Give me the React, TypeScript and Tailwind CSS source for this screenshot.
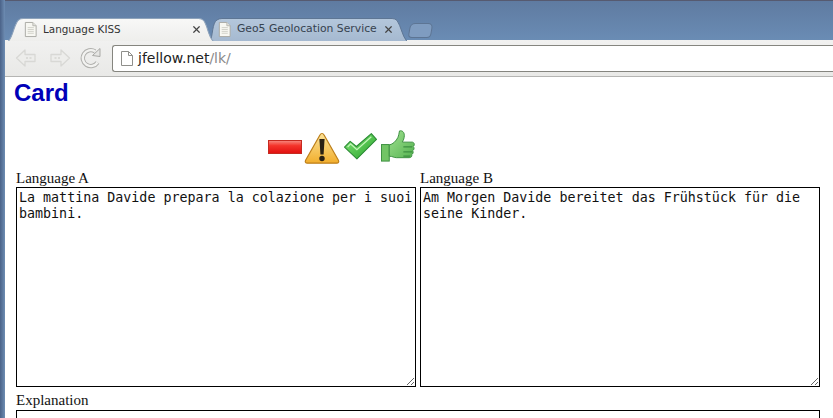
import React from 'react';
import { X } from 'lucide-react';

function PageIcon({ className }: { className?: string }) {
  return (
    <svg viewBox="0 0 16 18" className={className}>
      <path d="M2.500 1.500h8l3.500 3.500v11.500h-11.500z" fill="#f7f7f2" stroke="#a9a9a3" strokeWidth="1" />
      <path d="M10.500 1.500v3.500h3.500" fill="#e3e3dd" stroke="#b5b5af" strokeWidth="1" />
      <path d="M5 7h6.500M5 9h6.500M5 11h6.500M5 13h6.500" stroke="#cfcfc8" strokeWidth="1" />
    </svg>
  );
}

function Tab({ title, active, width, textSize, path }: { title: string; active?: boolean; width: string; textSize: string; path: string }) {
  return (
    <div className={`relative h-[23px] shrink-0 ${width} ${active ? 'z-10' : '-ml-[5px]'}`}>
      <svg className="absolute inset-0 w-full h-full" preserveAspectRatio="none" viewBox="0 0 200 23">
        <defs>
          <linearGradient id="tabOn" x1="0" y1="0" x2="0" y2="1">
            <stop offset="0" stopColor="#f8f8f7" />
            <stop offset="1" stopColor="#eeeeec" />
          </linearGradient>
          <linearGradient id="tabOff" x1="0" y1="0" x2="0" y2="1">
            <stop offset="0" stopColor="#b4c7dc" />
            <stop offset="1" stopColor="#a5b9d0" />
          </linearGradient>
        </defs>
        <path d={path} fill={active ? 'url(#tabOn)' : 'url(#tabOff)'} stroke={active ? '#8ea3bb' : '#5d7594'} strokeWidth="1" />
      </svg>
      <div className={`relative h-full flex items-center ${active ? 'pl-[15px] pr-[12px]' : 'pl-[8px] pr-[14px]'}`}>
        <PageIcon className="w-[15px] h-[17px] shrink-0" />
        <span className={`ml-[5px] flex-1 whitespace-nowrap font-['DejaVu_Sans',sans-serif] ${textSize} ${active ? 'text-[#333]' : 'text-[#36424f]'}`}>
          {title}
        </span>
        <X className="w-[11px] h-[11px] text-[#444]" strokeWidth={2.6} />
      </div>
    </div>
  );
}

function NavArrow({ flip }: { flip?: boolean }) {
  return (
    <svg viewBox="0 0 24 20" className={`w-[24px] h-[20px] ${flip ? '-scale-x-100' : ''}`}>
      <path d="M11 2 2.500 10l8.500 8v-4.500h10v-7h-10z" fill="#ededeb" stroke="#d8d8d5" strokeWidth="1.300" strokeLinejoin="round" />
      <path d="M12 10h7" stroke="#dbdbd8" strokeWidth="2" strokeDasharray="2 1.500" />
    </svg>
  );
}

function ReloadIcon() {
  return (
    <svg viewBox="0 0 22 22" className="w-[22px] h-[22px]">
      <path d="M17.500 15.500A8 8 0 1 1 15 4.300" fill="none" stroke="#b0b0ad" strokeWidth="4.400" />
      <path d="M17.500 15.500A8 8 0 1 1 15 4.300" fill="none" stroke="#f2f2f0" strokeWidth="2.400" />
      <path d="M12.500 8.500 20 9.500V1.500z" fill="#e6e6e4" stroke="#a9a9a6" strokeWidth="1" strokeLinejoin="round" />
    </svg>
  );
}

function MinusIcon() {
  return (
    <svg viewBox="0 0 34 14" className="w-[34px] h-[14px] mt-[11px]">
      <defs>
        <linearGradient id="minusFill" x1="0" y1="0" x2="0" y2="1">
          <stop offset="0" stopColor="#f78a80" />
          <stop offset="0.4" stopColor="#f5332a" />
          <stop offset="1" stopColor="#e00f0f" />
        </linearGradient>
      </defs>
      <rect x="0.500" y="0.500" width="33" height="13" fill="url(#minusFill)" stroke="#c52a20" />
    </svg>
  );
}

function WarningIcon() {
  return (
    <svg viewBox="0 0 36 32" className="w-[36px] h-[32px] ml-[2px] mt-[3px]">
      <defs>
        <linearGradient id="warnFill" x1="0" y1="0" x2="0" y2="1">
          <stop offset="0" stopColor="#fbe39a" />
          <stop offset="1" stopColor="#f2ae2c" />
        </linearGradient>
      </defs>
      <path d="M18 1.500c1 0 1.600.6 2.200 1.700l14.200 25c.8 1.600.1 3-1.700 3H3.300c-1.800 0-2.500-1.400-1.700-3l14.200-25c.6-1.100 1.200-1.700 2.200-1.700z" fill="url(#warnFill)" stroke="#bd7f1a" strokeWidth="1.200" />
      <path d="M15.400 7h5.200l-1 15.500h-3.200z" fill="#2a2013" />
      <circle cx="18" cy="26.500" r="2.700" fill="#2a2013" />
    </svg>
  );
}

function CheckIcon() {
  return (
    <svg viewBox="0 0 32 26" className="w-[33px] h-[27px] ml-[4px] mt-[4px]">
      <defs>
        <linearGradient id="checkFill" x1="0" y1="0" x2="1" y2="1">
          <stop offset="0" stopColor="#86e878" />
          <stop offset="1" stopColor="#25a02a" />
        </linearGradient>
      </defs>
      <path d="M.500 13.500 6 8l6 5L26.500.500l5 5.500L12.500 25z" fill="url(#checkFill)" stroke="#2a8a34" strokeWidth="1" strokeLinejoin="round" />
      <path d="M3.500 13.500 6.500 10.500 12.500 16 26.500 3.500" fill="none" stroke="#c2f6b8" strokeWidth="1.200" />
    </svg>
  );
}

function ThumbIcon() {
  return (
    <svg viewBox="0 0 36 35" className="w-[35px] h-[35px] ml-[4px]">
      <defs>
        <linearGradient id="thumbFill" x1="0" y1="0" x2="1" y2="1">
          <stop offset="0" stopColor="#9fe08f" />
          <stop offset="1" stopColor="#55b350" />
        </linearGradient>
      </defs>
      <rect x="0.500" y="15.500" width="8" height="17" fill="#72c465" stroke="#3c8f40" />
      <path d="M8.500 16c4-1 7-4 9-8 .8-2 1-4 1.500-6.500 3-.8 5 1.500 5 4.500 0 3-1 5-2 7h10c2.500 0 3 3.500 1 4.500 1.500 1.200 1.300 3.500-.5 4.300 1 1.300.7 3.300-1 4 .7 1.700-.3 3.200-2.500 3.200H16c-3 0-4-1.500-7.500-1.500z" fill="url(#thumbFill)" stroke="#3c8f40" strokeWidth="1" strokeLinejoin="round" />
      <path d="M23 18h9M23 23h9M23 27.500h7" stroke="#3c8f40" strokeWidth="1.300" />
    </svg>
  );
}

export default function App() {
  const box = "block bg-white border border-black p-[2px] text-[#111] text-[13.33px] leading-[16px] font-['DejaVu_Sans_Mono',monospace]";
  const label = "font-['Liberation_Serif',serif] text-[15px] leading-[17px] text-[#111]";

  return (
    <div className="flex h-[418px] w-[833px] overflow-hidden bg-white">
      <div className="w-[5px] shrink-0 bg-gradient-to-r from-[#4a6288] to-[#6e8db3]" />

      <div className="flex-1 min-w-0 flex flex-col">
        {/* window title + tabs */}
        <div className="h-[40px] shrink-0 pt-[17px] pl-[3px] flex items-start border-t border-[#565a70] bg-gradient-to-b from-[#5f7ba1] to-[#6a8cb4]">
          <Tab
            active
            title="Language KISS"
            width="w-[206px]"
            textSize="text-[10.4px]"
            path="M0 23.500C5 20 6 4 11 1.500Q12 .5 15 .5H185Q188 .5 190 2.500C194 8 194 18 199.500 23.500Z"
          />
          <Tab
            title="Geo5 Geolocation Service"
            width="w-[199px]"
            textSize="text-[10.8px]"
            path="M1 23.500C4 18 3 5 8 2Q10 .5 13 .5H184Q187 .5 189 2.500C193 8 194 18 199 23.500Z"
          />
          <div className="ml-[1px] mt-[5px] h-[15px] w-[23px] shrink-0 rounded-t-[5px] rounded-b-[4px] border border-[#5d7594] bg-[#7f9cc0] -skew-x-[10deg]" />
        </div>

        {/* toolbar */}
        <div className="h-[37px] shrink-0 flex items-center pl-[9px] bg-gradient-to-b from-[#f1f1f0] to-[#e9e9e7] border-b border-[#b5b5b3]">
          <NavArrow />
          <div className="ml-[10px]">
            <NavArrow flip />
          </div>
          <div className="ml-[8px]">
            <ReloadIcon />
          </div>
          <div className="ml-[10px] h-[27px] flex-1 flex items-center pl-[8px] rounded-l-[3px] bg-white border border-r-0 border-[#85857f]">
            <svg viewBox="0 0 12 15" className="w-[12px] h-[15px]">
              <path d="M.5.500h7l4 4v10H.500z" fill="#fff" stroke="#8f8f8b" />
              <path d="M7.500.500v4h4" fill="none" stroke="#8f8f8b" />
            </svg>
            <span className="ml-[5px] font-['DejaVu_Sans',sans-serif] text-[14px] text-[#222]">
              jfellow.net<span className="text-[#8a8a8a]">/lk/</span>
            </span>
          </div>
        </div>

        {/* page */}
        <div className="flex-1 min-h-0 pl-[9px]">
          <h1 className="font-['Liberation_Sans',sans-serif] font-bold text-[24px] leading-[27px] mt-[2px] text-[#0000b8]">Card</h1>
          <div className="h-[41px] mt-[23px] ml-[254px] flex items-start">
            <MinusIcon />
            <WarningIcon />
            <CheckIcon />
            <ThumbIcon />
          </div>
          <div className="pl-[2px] grid grid-cols-[400px_400px] gap-x-[4px]">
            <div>
              <div className={label}>Language A</div>
              <textarea
                readOnly
                className={`${box} w-[400px] h-[200px]`}
                defaultValue="La mattina Davide prepara la colazione per i suoi bambini."
              />
            </div>
            <div>
              <div className={label}>Language B</div>
              <textarea
                readOnly
                className={`${box} w-[400px] h-[200px]`}
                defaultValue="Am Morgen Davide bereitet das Frühstück für die seine Kinder."
              />
            </div>
            <div className="col-span-2 mt-[5px]">
              <div className={label}>Explanation</div>
              <textarea readOnly className={`${box} w-[804px] h-[120px] mt-[1px]`} defaultValue="" />
            </div>
          </div>
        </div>
      </div>
    </div>
  );
}
